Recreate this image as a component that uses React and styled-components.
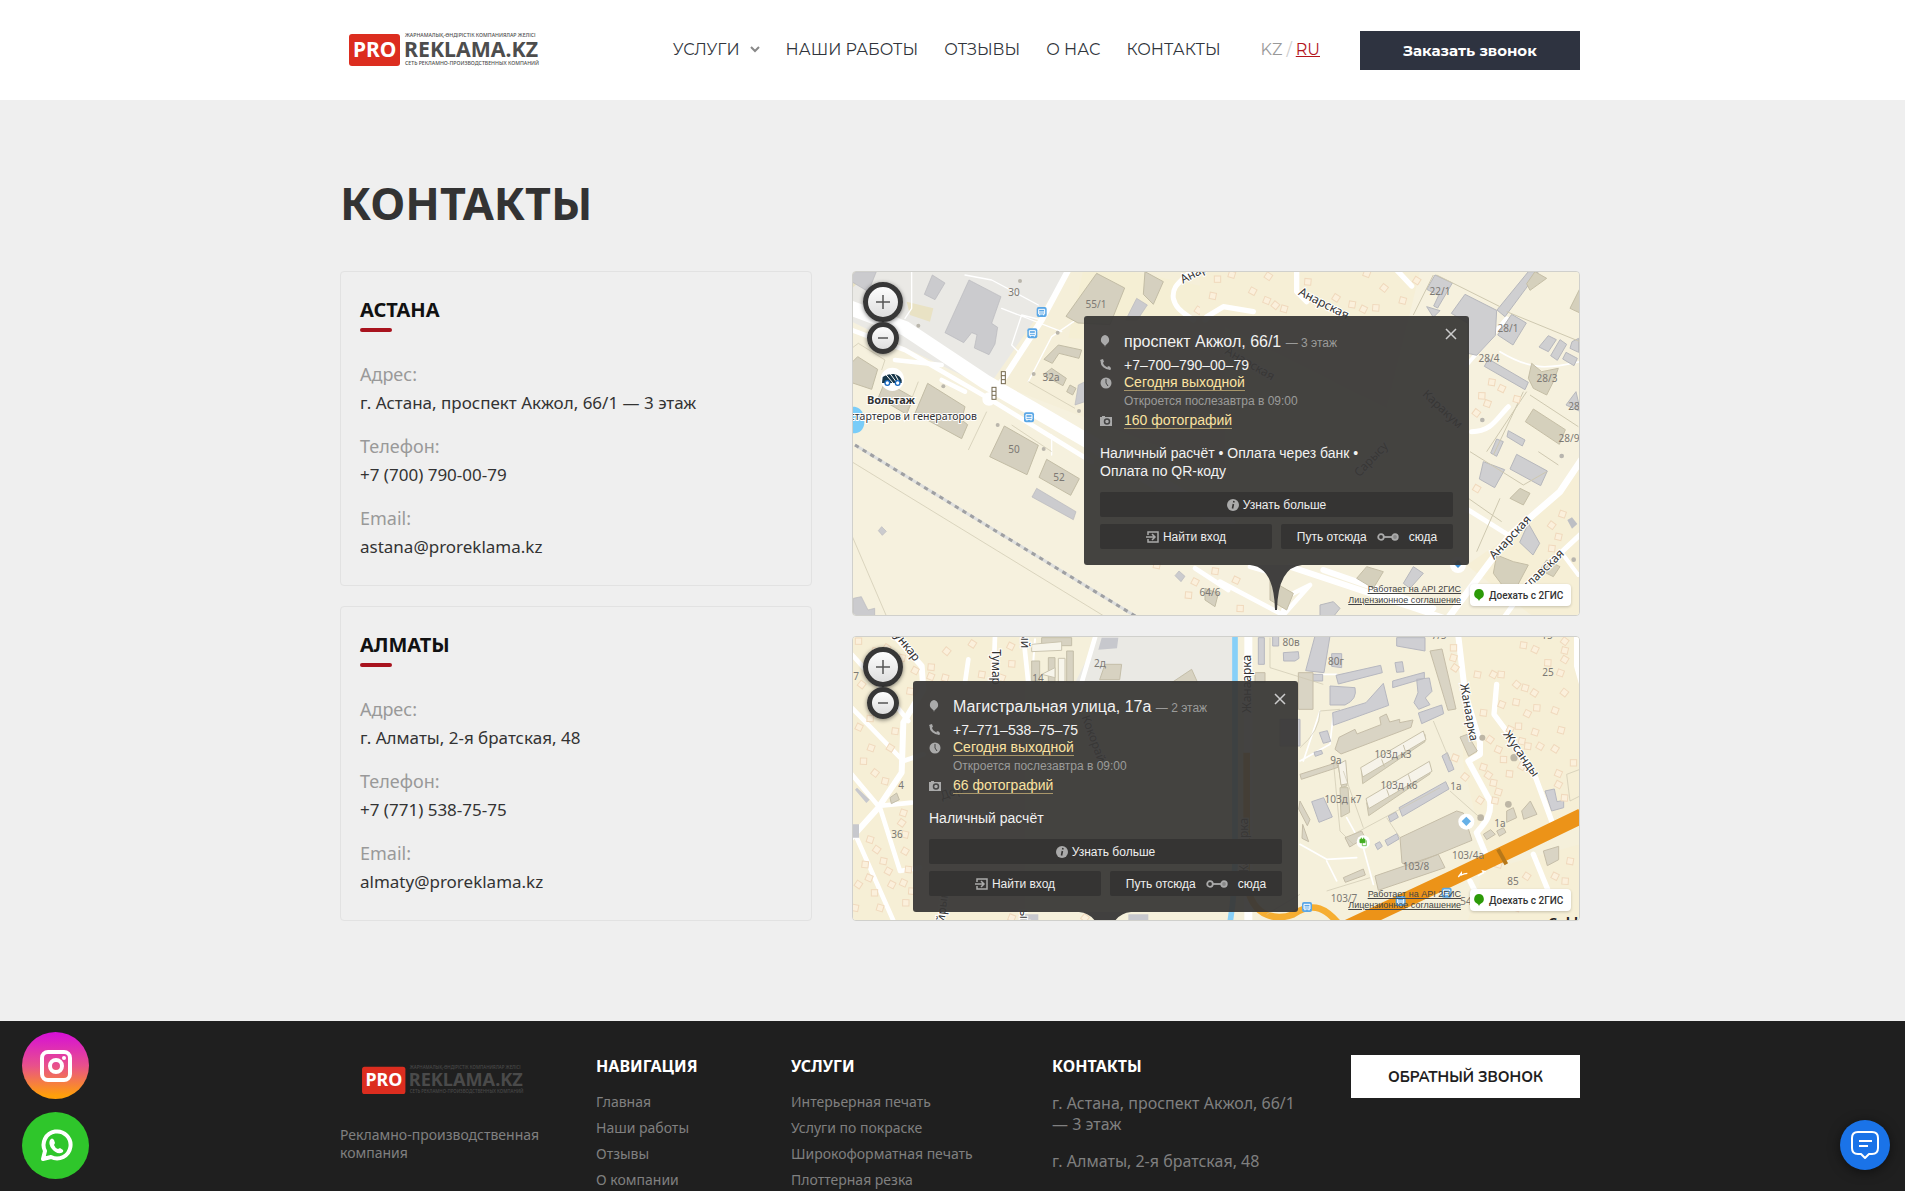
import styled, { createGlobalStyle, css } from 'styled-components'

const GlobalStyle = createGlobalStyle`
  * {
    box-sizing: border-box;
  }
  body {
    margin: 0;
    background: #efefef;
    font-family: 'Noto Sans', 'Open Sans', sans-serif;
    color: #333;
  }
  h1, h2, h3, p, ul, dl, dd {
    margin: 0;
    padding: 0;
  }
  a {
    color: inherit;
    text-decoration: none;
  }
  button {
    font: inherit;
    border: 0;
    cursor: pointer;
  }
`

const Page = styled.div`
  display: flex;
  flex-direction: column;
  min-height: 100vh;
`
const Wrap = styled.div`
  width: 100%;
  max-width: 1255px;
  margin: 0 auto;
  padding-left: 15px;
`

const Header = styled.header`
  background: #fff;
`
const HeaderRow = styled(Wrap)`
  display: flex;
  align-items: center;
  height: 100px;
`
const LogoLink = styled.a`
  display: flex;
  margin-left: 9px;
  svg {
    display: block;
    width: 188px;
  }
`
const Nav = styled.nav`
  display: flex;
  align-items: center;
  gap: 26px;
  margin-left: auto;
  padding-bottom: 2px;
  font-family: Montserrat, Inter, sans-serif;
  font-size: 16px;
  color: #2f343b;
`
const NavLink = styled.a`
  display: flex;
  align-items: center;
  gap: 10px;
`
const Lang = styled.div`
  display: flex;
  gap: 4px;
  margin: 0 40px;
  padding-bottom: 2px;
  font-family: Montserrat, Inter, sans-serif;
  font-size: 16px;
  color: #ccc;
`
const LangLink = styled.a`
  color: #999;
  ${(props) =>
    props.$active &&
    css`
      color: #b3141b;
      text-decoration: underline;
    `}
`
const CallButton = styled.button`
  width: 220px;
  height: 39px;
  background: #2e3340;
  color: #fff;
  font-family: Montserrat, 'Open Sans', sans-serif;
  font-size: 15px;
  font-weight: 700;
`

const Main = styled(Wrap)`
  padding-top: 72px;
  padding-bottom: 100px;
`
const Title = styled.h1`
  font-size: 45px;
  line-height: 62px;
  font-weight: 700;
`
const Columns = styled.div`
  display: grid;
  grid-template-columns: 472fr 728fr;
  gap: 40px;
  margin-top: 37px;
`
const Column = styled.div`
  display: flex;
  flex-direction: column;
  gap: 20px;
`
const Card = styled.section`
  padding: 23px 19px 24px;
  border: 1px solid #e2e2e2;
  border-radius: 4px;
`
const CardTitle = styled.h2`
  font-size: 20px;
  line-height: 29px;
  font-weight: 700;
  color: #111;
  &::after {
    content: '';
    display: block;
    width: 32px;
    height: 4px;
    margin-top: 4px;
    border-radius: 2px;
    background: #a8131e;
  }
`
const Info = styled.dl`
  display: grid;
  gap: 15px;
  margin-top: 28px;
`
const Label = styled.dt`
  font-size: 18px;
  line-height: 28px;
  color: #999;
`
const Value = styled.dd`
  font-size: 17px;
  line-height: 29px;
`

const MapBox = styled.section`
  position: relative;
  height: ${(props) => props.$height}px;
  overflow: hidden;
  border: 1px solid #d0d0cc;
  border-radius: 4px;
  background: #f5f1dd;
  font-family: 'Liberation Sans', Arial, sans-serif;
`
const MapSvg = styled.svg`
  position: absolute;
  top: 0;
  left: 0;
  display: block;
`
const Zoom = styled.div`
  position: absolute;
  top: 10px;
  left: 10px;
  display: flex;
  flex-direction: column;
  align-items: center;
`
const ZoomButton = styled.button`
  display: grid;
  place-items: center;
  width: ${(props) => props.$size}px;
  height: ${(props) => props.$size}px;
  padding: 0;
  border: 5px solid #373737;
  border-radius: 50%;
  background: linear-gradient(#fdfdfd, #dedede);
  box-shadow: 0 1px 4px rgba(0, 0, 0, 0.5);
`
const Balloon = styled.div`
  position: absolute;
  top: 44px;
  left: ${(props) => props.$left}px;
  width: 385px;
  padding: 14px 16px 16px;
  border-radius: 3px;
  background: rgba(56, 55, 54, 0.94);
  color: #f2f2f2;
  font-size: 14px;
  line-height: 18px;
`
const Tail = styled.svg`
  position: absolute;
  top: 100%;
  left: 166px;
  display: block;
`
const Close = styled.button`
  position: absolute;
  top: 8px;
  right: 8px;
  display: flex;
  padding: 4px;
  background: none;
`
const Line = styled.div`
  display: grid;
  grid-template-columns: 24px 1fr;
  align-items: center;
  min-height: ${(props) => props.$height}px;
`
const Place = styled.h3`
  font-size: 16px;
  font-weight: 400;
`
const Muted = styled.span`
  font-size: 12px;
  color: #9b9b9a;
`
const Yellow = styled.a`
  justify-self: start;
  height: 16px;
  line-height: 15px;
  border-bottom: 1px solid #a8966a;
  color: #fbe2a0;
`
const Opens = styled(Muted)`
  display: block;
  padding-left: 24px;
  line-height: 20px;
`
const Payments = styled.p`
  margin: 13px 0 12px;
`
const Actions = styled.div`
  display: grid;
  grid-template-columns: 1fr 1fr;
  gap: 7px 9px;
`
const Action = styled.button`
  display: flex;
  align-items: center;
  justify-content: center;
  gap: ${(props) => props.$gap || 4}px;
  height: 25px;
  padding: 0;
  border-radius: 2px;
  background: #353433;
  color: #eee;
  font-size: 12px;
  grid-column: ${(props) => (props.$wide ? '1 / -1' : 'auto')};
`
const MapFooter = styled.div`
  position: absolute;
  right: 8px;
  bottom: 9px;
  display: flex;
  align-items: center;
  gap: 9px;
`
const Terms = styled.div`
  display: flex;
  flex-direction: column;
  align-items: flex-end;
  color: #444;
  font-size: 9px;
  line-height: 11px;
  a {
    text-decoration: underline;
  }
`
const Drive = styled.a`
  display: flex;
  align-items: center;
  gap: 4px;
  width: 101px;
  height: 22px;
  padding-left: 3px;
  border-radius: 4px;
  background: #fff;
  box-shadow: 0 1px 3px rgba(0, 0, 0, 0.2);
  color: #333;
  font: 500 10px Roboto, sans-serif;
`

const Footer = styled.footer`
  flex: 1;
  background: #1f1f1f;
  color: #808080;
`
const FooterRow = styled(Wrap)`
  display: flex;
  padding-top: 34px;
`
const FooterCol = styled.div`
  width: ${(props) => props.$width}px;
`
const FooterLogo = styled.a`
  display: block;
  margin: 11px 0 31px 22px;
  svg {
    display: block;
    width: 160px;
  }
`
const About = styled.p`
  width: 210px;
  font-size: 14px;
  line-height: 18px;
`
const FooterTitle = styled.h3`
  font-size: 16px;
  line-height: 22px;
  font-weight: 700;
  color: #fff;
`
const FooterList = styled.ul`
  display: grid;
  gap: 8px;
  margin-top: 16px;
  list-style: none;
  font-size: 14px;
  line-height: 18px;
`
const Address = styled.p`
  max-width: 250px;
  margin-top: 16px;
  font-size: 16px;
  line-height: 21px;
`
const BackCall = styled.button`
  width: 229px;
  height: 43px;
  margin-left: auto;
  background: #fff;
  color: #1f1f1f;
  font-family: Nunito, 'Open Sans', sans-serif;
  font-size: 15px;
  font-weight: 700;
`
const Socials = styled.div`
  position: fixed;
  left: 22px;
  bottom: 12px;
  display: grid;
  gap: 13px;
`
const Social = styled.a`
  display: grid;
  place-items: center;
  width: 67px;
  height: 67px;
  border-radius: 50%;
  background: ${(props) => props.$bg};
`
const Chat = styled.button`
  position: fixed;
  right: 15px;
  bottom: 21px;
  display: grid;
  place-items: center;
  width: 50px;
  height: 50px;
  padding: 0;
  border-radius: 50%;
  background: #1a73e8;
  box-shadow: 0 2px 12px rgba(0, 0, 0, 0.5);
`

const Logo = ({ dim }) => (
  <svg viewBox="0 0 188 34" overflow="visible" fontFamily="Noto Sans, sans-serif">
    <rect y="1" width="51" height="32" rx="3" fill="#dc2d1f" />
    <g fontSize="21" fontWeight="700">
      <text x="4" y="24" fill="#fff">PRO</text>
      <text x="55" y="24" fontSize="21.300" fill={dim ? '#4a4a4a' : '#4d4d4d'}>REKLAMA.KZ</text>
    </g>
    <g fontSize="5.200" fontWeight="500" fill={dim ? '#4a4a4a' : '#4d4d4d'}>
      <text x="56" y="4">ЖАРНАМАЛЫҚ-ӨНДІРІСТІК КОМПАНИЯЛАР ЖЕЛІСІ</text>
      <text x="56" y="32">СЕТЬ РЕКЛАМНО-ПРОИЗВОДСТВЕННЫХ КОМПАНИЙ</text>
    </g>
  </svg>
)

const Labels = ({ items, ...rest }) => (
  <g fontFamily="Noto Sans, sans-serif" {...rest}>
    {items.map(([text, x, y, angle = 0], i) => (
      <text key={i} textAnchor="middle" transform={`translate(${x} ${y}) rotate(${angle})`}>
        {text}
      </text>
    ))}
  </g>
)

const Houses = ({ points }) => (
  <g fill="#fbf0dc" stroke="#f0d9bd" strokeWidth="3">
    {points.map(([x, y], i) => (
      <rect key={i} x={-9} y={-9} width="19" height="19" transform={`translate(${x} ${y}) rotate(${(i * 17) % 40})`} />
    ))}
  </g>
)

const Bus = ({ x, y }) => (
  <g transform={`translate(${x} ${y})`}>
    <rect x="-15" y="-15" width="30" height="30" rx="6" fill="#5aa7e6" />
    <path d="M-9 -8h18v14h-18zM-9 0h18M-6 6v4M6 6v4" fill="none" stroke="#fff" strokeWidth="3" />
  </g>
)

const AstanaMap = () => (
  <MapSvg width="728" height="345" viewBox="0 0 728 345" aria-hidden="true">
    <rect width="728" height="345" fill="#f6f1de" />
    <g transform="translate(-8 -7) scale(0.33333)">
      <path d="M20 20H670L430 370 20 170Z" fill="#eae9e5" />
      <path d="M20 20h60L20 70zM185 110l80 20-10 40-60-20z" fill="#e9e2c4" />
      <path d="M670 20L1140 20V620L440 350Z" fill="#f5efd9" />
      <path d="M720 -10l380 80-130 160-300-10z" fill="#f5efd4" />
      <g fill="none" stroke="#fff" strokeLinecap="round" strokeLinejoin="round">
        <path d="M20 130L180 190 420 350 560 430 800 570 1150 780" strokeWidth="44" />
        <path d="M20 195L180 255 430 400 740 590" strokeWidth="14" />
        <path d="M670 15L590 165 470 350 425 410" strokeWidth="18" />
        <path d="M150 285L290 300 M290 345L360 380M430 400v10" strokeWidth="14" />
        <path d="M360 30L440 45 580 120 M590 165L530 150 500 240 520 260M470 130L650 200M200 20v110l-20 30" strokeWidth="4" />
        <path d="M550 350L620 215 700 160M620 570v-60" strokeWidth="4" />
        <path d="M1040 15C1010 50 980 60 985 100c8 35 35 45 60 65M1140 120l-60 45" strokeWidth="15" />
        <path d="M1050 910L1150 975" strokeWidth="14" />
      </g>
      <circle cx="432" cy="402" r="20" fill="#fff" />
      <g fill="#cbcbce" stroke="#b8b8bc" strokeWidth="2">
        <path d="M372 45l96 50-28 80 18 12-8 50-18 32-44-20 8-40-16-6-24 30-56-30zM262 30l38 24-30 50-32-16zM24 20h70L70 80 20 50z" />
        <path d="M575 670l118 70-8 24-124-68zM875 100l32 20-30 45h-35zM100 797l10-12 14 14-12 12zM25 1000l24-5 20 40 20-5v22H25zM700 360l20-10v60l-30 10zM990 932l12-14 18 16-12 16z" />
      </g>
      <g fill="#d5d0bf" stroke="#c2bca5" strokeWidth="3">
        <path d="M38 275l60 38-18 60-60-20v-60zM120 350l85 48-20 50-85-50zM248 355l112 70-10 40 18 14-18 42-140-76zM478 483l102 58-34 88-112-54zM605 583l98 58-26 50-95-54zM755 25l84 44-44 110-96-5-36-20zM900 20l55 30-30 68-30-30zM640 240l70 15-8 25-60-15-20 30-25-12zM620 310l44 30-10 22-60-32zM675 360l18 10-10 20-18-10zM1080 970l40 15-10 40-30-20z" />
      </g>
      <path d="M20 250l20-15 80 50-10 30M220 350l-35 90M370 555L425 440M550 350l140 80M20 590L780 1055M20 810L125 1055M500 480l120 80" fill="none" stroke="#cbc6ae" strokeWidth="2" />
      <path d="M30 540L890 1065" stroke="#dedfde" strokeWidth="9" />
      <path d="M30 540L890 1065" stroke="#9fa0a3" strokeWidth="9" strokeDasharray="13 14" />
      <path d="M24 425c30 0 34 30 34 45 0 25-15 35-34 35z" fill="#79ccf8" />
      <Houses points={[[1120, 40], [1105, 92], [1060, 135], [935, 900], [1050, 950], [1030, 990]]} />
      <Bus x={590} y={141} />
      <Bus x={562} y={205} />
      <Bus x={552} y={457} />
      {[[475, 338], [447, 385]].map(([x, y]) => (
        <g key={x} transform={`translate(${x} ${y})`} fill="#fff" stroke="#75694f" strokeWidth="3">
          <rect x="-6" y="-18" width="12" height="36" />
          <path d="M-6 -6H6M-6 6H6" />
        </g>
      ))}
      <circle cx="142" cy="343" r="35" fill="#fff" />
      <path d="M111 354l2-18q14-10 35-9 18 4 22 18v9z" fill="#18384b" />
      <path d="M122 328l22 26M136 327l20 27M150 328l14 26" stroke="#fff" strokeWidth="3" />
      <circle cx="127" cy="354" r="7" fill="#fff" stroke="#1768c0" strokeWidth="4" />
      <circle cx="158" cy="354" r="7" fill="#fff" stroke="#1768c0" strokeWidth="4" />
      <g fill="#bab6ac">
        {[[220, 182], [525, 48], [638, 203], [566, 327], [458, 480], [596, 552], [702, 438], [295, 364]].map(([x, y]) => (
          <circle key={x} cx={x} cy={y} r="6" />
        ))}
      </g>
    </g>
    <g transform="translate(347 -7) scale(0.33333)">
      <path d="M0 20H660L560 430 360 330 0 150Z" fill="#f6efd6" />
      <path d="M1140 600V1055H1000L800 900 990 770Z" fill="#f6efd6" />
      <g fill="none" stroke="#fff" strokeLinecap="round" strokeLinejoin="round">
        <path d="M290 15v65l30 30M20 155l50-30 90 15M590 15l45 48" strokeWidth="16" />
        <path d="M805 735L925 810M815 500c60 0 75-40 110-75" strokeWidth="15" />
        <path d="M1150 575L1080 680 930 810 740 1065" strokeWidth="20" />
        <path d="M1150 800L990 950 910 1060" strokeWidth="15" />
        <path d="M270 905L750 1065M370 915L700 1030" strokeWidth="18" />
        <path d="M60 950l180 95M240 1060l30-70 60-30-80 90M150 905l70 20" strokeWidth="14" />
        <path d="M920 160l-120 140M1090 870l45 60" strokeWidth="12" />
        <path d="M900 260c100 60 150 50 240 30" strokeWidth="5" />
      </g>
      <g fill="#cfcfd1" stroke="#b6b7bc" strokeWidth="3">
        <path d="M705 30l52 24-44 75-12-6 15-32-36-18zM795 88l95 48-4 75-56 60-26-6v-90l-50-30zM985 20h30l-100 135-24-20zM935 148l44 26-40 66-46-30zM1045 212l24 12-24 36-28-14zM1080 224l20 14-28 48-20-14zM1110 250l26 12V220l-20 10zM1098 262l34 18-10 22-34-20zM865 282l120 70-10 22-122-70zM925 497l50 28-8 18-46-28zM890 522l20 8-20 44-18-10zM950 568l92 50-20 44-92-50zM850 590l64 24-30 54-46-26zM1128 380l14 60-44-20zM985 775l34 60-20 35-40-38zM680 125l40 12-20 20zM640 905l30 20-40 45-20-15zM360 1020l40-10 20 20-20 25h-40z" />
      </g>
      <g fill="#d5d0bc" stroke="#c5bea6" strokeWidth="3">
        <path d="M1000 432l96 62-18 44-102-68zM995 295l30 25 50-10-15 40-20 40-40-20-15-30zM1005 20l35 20-50 36-10-20zM1140 70l-30 60 30 14zM960 670l30 15-20 35-40-20zM890 870l50 20 45 10-45 85-30-20-30-40zM500 905l50 15-30 50-50-30zM1040 885l40 20-20 30-40-20zM210 945l70 40-20 50-50-30z" />
      </g>
      <path d="M700 30L640 150M710 30l190 95M920 140l220 90M810 560l160 100 70-40M970 380l-90 190M990 390l145 95M1075 600l-60-40M900 700L830 860M805 700l100 70M980 380L860 560" fill="none" stroke="#cec8b0" strokeWidth="3" />
      <Houses points={[[52, 42], [95, 28], [205, 33], [38, 92], [158, 78], [323, 50], [200, 106], [226, 120], [252, 131], [408, 98], [456, 118], [490, 132], [527, 128], [500, 25], [552, 68], [608, 106], [650, 46], [875, 351], [905, 370], [845, 392], [862, 415], [829, 443], [950, 402], [830, 670], [45, 918], [108, 945], [120, 1030], [1087, 747], [1055, 780], [1075, 815], [905, 1000], [1055, 850]]} />
      <g fill="#b8b5ae">
        <circle cx="847" cy="465" r="7" />
        <circle cx="1085" cy="573" r="7" />
        <circle cx="1121" cy="884" r="7" />
      </g>
      <path d="M1102 765l14-8 16 20-16 14z" fill="#bdbfc4" />
      <circle cx="774" cy="900" r="24" fill="#fff" />
      <path d="M774 885l12 12-12 12-12-12z" fill="#3a8ed6" />
    </g>
    <Labels fill="#7c7974" fontSize="10" items={[['30', 161, 24], ['55/1', 243, 36], ['32а', 198, 109], ['50', 161, 181], ['52', 206, 209], ['64/6', 357, 324], ['22/1', 587, 23], ['28/1', 655, 60], ['28/4', 636, 90], ['28/3', 694, 110], ['28', 721, 138], ['28/9', 716, 170]]} />
    <Labels fill="#333" fontSize="12" stroke="#fff" strokeWidth="2" paintOrder="stroke" items={[['Анарская', 469, 35, 27], ['Анарская', 354, -1, -28], ['Анарская', 660, 268, -47], ['Ярославская', 685, 308, -44], ['Каракум', 587, 140, 43], ['Сарысу', 521, 190, -46], ['Анарская', 395, 95, 30]]} />
    <g fontFamily="Noto Sans, sans-serif" fill="#333" stroke="#fff" strokeWidth="2" paintOrder="stroke">
      <text x="38" y="132" fontSize="11" fontWeight="700" textAnchor="middle">Вольтаж</text>
      <text x="124" y="148" fontSize="10.500" textAnchor="end">стартеров и генераторов</text>
    </g>
  </MapSvg>
)

const AlmatyMap = () => (
  <MapSvg width="728" height="285" viewBox="0 0 728 285" aria-hidden="true">
    <rect width="728" height="285" fill="#f5f0db" />
    <g transform="translate(-8 -6) scale(0.33333)">
      <path d="M20 15H540V880H20Z" fill="#f6efd6" />
      <path d="M760 15h400v140H690z" fill="#eae9e4" />
      <g fill="none" stroke="#fff" strokeLinecap="round" strokeLinejoin="round">
        <path d="M150 15l80 90 5 70-60 100-5 150-70 105L15 625" strokeWidth="18" />
        <path d="M20 70l90 100 80 100M20 230l155 160 60-20M20 430l80 95 100-10M105 530l60 190 60-10M35 620L150 880M450 15l-5 140M370 85l-10 70M535 15l15 140M750 20l-40 135" strokeWidth="14" />
        <path d="M560 40h100M560 155l10-130" strokeWidth="6" />
      </g>
      <g fill="#d7d2c1" stroke="#c4bea9" strokeWidth="3">
        <path d="M590 20h90v24h-90zM1040 115l18 40h-78zM780 100h50l-6 46h-60zM665 60h20v95h-20zM610 80h20v75h-20zM560 90h24v60h-24zM135 500l20-14 8 20-24 12z" />
      </g>
      <g fill="#f7f5eb" stroke="#cbc5b0" strokeWidth="3">
        <path d="M560 40l90-8v26l-90 4zM640 82h20v72h-20zM590 130l40-20v30z" />
      </g>
      <path d="M770 20h50l-4 32-56 4zM36 470l38 36-10 10-34-40zM20 580h22v40H20zM540 850h40v20h-40zM850 850h60v24h-60z" fill="#c7c8cd" />
      <Houses points={[[40, 30], [90, 60], [125, 50], [170, 80], [210, 118], [258, 108], [257, 136], [305, 60], [300, 140], [382, 38], [410, 130], [497, 45], [500, 98], [470, 140], [50, 160], [100, 130], [140, 200], [195, 180], [42, 288], [75, 262], [78, 350], [90, 425], [120, 450], [136, 350], [150, 300], [110, 240], [55, 390], [175, 545], [170, 575], [180, 610], [180, 660], [190, 715], [175, 755], [182, 815], [75, 625], [95, 655], [115, 690], [130, 720], [60, 700], [72, 740], [88, 785], [105, 830], [40, 760], [30, 830], [140, 760], [200, 780], [500, 860], [720, 860]]} />
    </g>
    <g transform="translate(347 -6) scale(0.33333)">
      <path d="M0 15H105V160H0Z" fill="#eae9e4" />
      <path d="M780 15H1140V560L860 700 790 400Z" fill="#f6efd6" />
      <path d="M1140 640V880H800L850 720Z" fill="#f6efd6" />
      <g fill="none" stroke="#fff" strokeLinecap="round" strokeLinejoin="round">
        <path d="M145 15V870" strokeWidth="24" />
        <path d="M775 15l20 170 45 150v35l-35 20 65 120c5 45-15 65-40 95l25 60" strokeWidth="18" />
        <path d="M890 160l-8 90 45 60 80 130 48 130M1000 670l45 110M1130 15v90l14 50M810 750l15 30" strokeWidth="16" />
        <path d="M300 390l90-50 10-90M350 130h60M440 560l50 90 30 110M300 640l80 45 90-5M360 240l-50 150M380 690l30 60" strokeWidth="5" />
      </g>
      <path d="M105 15v670q0 100-15 190" fill="none" stroke="#87d0f8" strokeWidth="17" />
      <path d="M140 365V760c20 110 100 105 140 90 60-40 100-20 150 45" fill="none" stroke="#f6ae31" strokeWidth="20" />
      <g fill="#cfcfd3" stroke="#b6b7bf" strokeWidth="3">
        <path d="M345 15h45l-18 110-55-6zM175 20h18v80h-18zM250 65l45-3 2 20-12 8h-34zM218 15h18v30h-18zM330 130h38v20h-38zM395 68h30v42l-30-4zM408 133l134-30 5 22-132 34zM585 95l22-3 5 30-22 2zM578 150l95-26v18l-95 28zM650 145l38-4 8 40-20 20 14 20-34 14-14-20 12-30zM390 165l75 5q8 35-30 52h-45zM398 245l100-30 52-58 16 66-166 60zM655 246l70-24 6 26-66 30zM358 305l24-6 10 32-22 6zM342 364l22-6 4 10-22 8zM335 512l36-12 26 58-40 16zM597 530l140-78 10 22-140 82zM726 375l16-10 20 50-16 8zM565 555l22-12 8 16-24 14zM555 628l36-20 6 16-34 20zM590 20h85v40l-85-15zM1035 480l28-6 8 38 20-4v22l-36 10zM240 265h60v80h-60zM525 640l14-8 8 14-14 10z" />
      </g>
      <g fill="#d9d4c4" stroke="#c5bda8" strokeWidth="3">
        <path d="M690 60l36-6 42 180-24 4zM295 125h44v110h-44zM165 125h30v30h-30zM405 355l12-36 48-24 6 14 72-28-4-22 20-10 10 24 30-8v10l40-8-6 22-210 80zM600 620L770 540l20 6 26 82-190 78-20-10zM525 735l190-65 20 40-200 68zM780 318l22-8 30 50-26 16zM435 620l50-20 10 20-46 28zM300 510l30 56-8 18-26-50zM308 580l18 52-20-10zM300 430l110-35 4 14-110 36zM430 740l60-26 6 18-60 22zM965 540l26-30 20 40-40 15zM920 540l20-10 10 30-30 14zM850 610l22-14 14 14-26 16zM890 600l20-10 8 14-20 12zM1030 660l46-14v40l-34 18z" />
      </g>
      <g stroke="#c8c1aa" strokeWidth="3">
        <path d="M485 420l190-110v22L488 458zM500 515l190-110v24L506 554zM415 405l20-10 6 70-16 4zM420 470h24l5 74-26 14z" fill="#d8d3c1" />
        <path d="M482 410l188-110 8 26-190 112zM498 503l190-112 8 30-190 112zM415 400l22-12 6 70-20 4z" fill="#f6f3e9" />
        <path d="M545 385l8 22M610 342l8 24M560 475l8 22M625 430l8 24" />
      </g>
      <path d="M210 20v90l160 50M360 240l60-5M400 390l20 210 40 40M430 420l60 170M460 610l260-140M700 270l50 120M750 480l90 80M380 780l130-40M560 560l40 60M1100 430l40-15v80l-30 15zM360 240q0 60-60 110M200 850l100-60" fill="none" stroke="#cbc5af" strokeWidth="2" />
      <Houses points={[[760, 50], [760, 80], [765, 110], [832, 130], [880, 130], [903, 130], [905, 220], [950, 160], [975, 170], [1003, 185], [948, 213], [982, 247], [1010, 230], [1065, 238], [1093, 184], [1083, 297], [1065, 353], [970, 42], [1005, 55], [1043, 95], [1081, 125], [1094, 30], [1094, 58], [1094, 85], [850, 245], [930, 295], [955, 285], [1005, 303], [870, 325], [965, 330], [1020, 345], [983, 345], [895, 355], [910, 385], [850, 408], [865, 432], [880, 455], [965, 405], [928, 428], [1075, 427], [1120, 395], [895, 482], [840, 507], [885, 508], [1075, 460], [1093, 500], [765, 380], [795, 437], [895, 700], [980, 735], [1110, 690], [1065, 735], [1095, 750], [950, 830]]} />
      <path d="M440 890L760 740 1145 555" fill="none" stroke="#ec9318" strokeWidth="46" />
      <path d="M894 655l25 45" stroke="#b77819" strokeWidth="12" />
      <path d="M775 738l9-12v6q8-5 18-5M858 722l-10-2 3 5-18 10" fill="none" stroke="#fff" strokeWidth="4" />
      <Bus x={321} y={828} />
      <Bus x={602} y={810} />
      <Bus x={740} y={785} />
      <circle cx="799" cy="572" r="24" fill="#fff" />
      <path d="M799 557l14 14-14 14-14-14z" fill="#66b0e7" />
      <circle cx="490" cy="633" r="20" fill="#fff" />
      <path d="M480 625h15v10h-15zM484 620v5M491 620v5" fill="#43ad22" stroke="#43ad22" strokeWidth="3" />
      <path d="M487 636v8h12v-16" fill="none" stroke="#43ad22" strokeWidth="2" />
      <g fill="#bdb6a5">
        <circle cx="847" cy="320" r="9" />
        <circle cx="942" cy="380" r="11" />
        <circle cx="925" cy="520" r="10" />
        <circle cx="842" cy="560" r="10" />
      </g>
    </g>
    <Labels fill="#7c7974" fontSize="10" items={[['7', 3, 43], ['14', 185, 45], ['2д', 247, 30], ['36', 44, 201], ['4', 48, 152], ['80в', 438, 9], ['80г', 483, 28], ['7/5', 586, 2], ['25', 695, 39], ['9а', 483, 127], ['103д к3', 540, 121], ['103д к6', 546, 152], ['103д к7', 490, 166], ['1а', 603, 153], ['1а', 647, 190], ['103/8', 563, 233], ['103/4а', 615, 222], ['85', 660, 248], ['103/7', 491, 265], ['54', 613, 268], ['15', 694, 2]]} />
    <Labels fill="#333" fontSize="12" stroke="#fff" strokeWidth="2" paintOrder="stroke" items={[['Бункар', 49, 9, 52], ['Тумар', 139, 30, 90], ['ый', 168, 3, 90], ['Жанаарка', 398, 47, -90], ['Жанаарка', 612, 76, 80], ['Жусанды', 665, 119, 55], ['Жанаарка', 395, 210, -90], ['Кокорай', 237, 103, 70], ['Доре', 103, 158, -20], ['Тайрына', 93, 273, -83], ['ый', 167, 281, 90]]} />
    <text x="725" y="290" fontFamily="Noto Sans, sans-serif" fontSize="13" fontWeight="700" fill="#222" textAnchor="end">Gold</text>
  </MapSvg>
)

const PinIcon = () => (
  <svg width="12" height="14" viewBox="0 0 12 14" fill="#aaa">
    <path d="M5 0a5 5 0 0 1 2 9Q5 10 5 12 5 10 3 9A5 5 0 0 1 5 0z" />
  </svg>
)
const PhoneIcon = () => (
  <svg width="12" height="12" viewBox="0 0 12 12">
    <path d="M2 1q-1 4 2 6.500T10.500 10" fill="none" stroke="#aaa" strokeWidth="2.200" />
    <path d="M0 1l3-1 1 3-2 1zM7 8l2-1 2 2-1 2z" fill="#aaa" />
  </svg>
)
const ClockIcon = () => (
  <svg width="12" height="12" viewBox="0 0 12 12">
    <circle cx="6" cy="6" r="5.500" fill="#aaa" />
    <path d="M6 2v4l2 3" fill="none" stroke="#444" />
  </svg>
)
const CameraIcon = () => (
  <svg width="12" height="12" viewBox="0 0 12 12">
    <path d="M0 2h2V1h3v1h7v9H0z" fill="#aaa" />
    <circle cx="7" cy="6.500" r="2.500" fill="none" stroke="#444" strokeWidth="1.500" />
  </svg>
)

const MapCard = ({ height, left, address, floor, phone, photos, payments, children }) => (
  <MapBox $height={height} aria-label={address}>
    {children}
    <Zoom>
      <ZoomButton $size={40} aria-label="Приблизить">
        <svg width="16" height="16" viewBox="0 0 16 16">
          <path d="M8 1v14M1 8h14" stroke="#555" strokeWidth="1.500" />
        </svg>
      </ZoomButton>
      <ZoomButton $size={32} aria-label="Отдалить">
        <svg width="12" height="12" viewBox="0 0 12 12">
          <path d="M1 6h10" stroke="#555" strokeWidth="1.500" />
        </svg>
      </ZoomButton>
    </Zoom>
    <MapFooter>
      <Terms>
        <a href="#api">Работает на API 2ГИС</a>
        <a href="#license">Лицензионное соглашение</a>
      </Terms>
      <Drive href="#drive">
        <svg width="12" height="14" viewBox="0 0 12 14" fill="#2c9a08">
          <path d="M6 1a5 5 0 0 1 2 9.500Q6.500 11 6 13 5.500 11 4 10.500A5 5 0 0 1 6 1z" />
        </svg>
        Доехать с 2ГИС
      </Drive>
    </MapFooter>
    <Balloon $left={left}>
      <Close aria-label="Закрыть">
        <svg width="12" height="12" viewBox="0 0 12 12">
          <path d="M1 1l10 10M11 1L1 11" stroke="#ccc" strokeWidth="1.500" />
        </svg>
      </Close>
      <Line $height={24}>
        <PinIcon />
        <Place>
          {address} <Muted>— {floor} этаж</Muted>
        </Place>
      </Line>
      <Line $height={21}>
        <PhoneIcon />
        <span>{phone}</span>
      </Line>
      <Line $height={16}>
        <ClockIcon />
        <Yellow href="#hours">Сегодня выходной</Yellow>
      </Line>
      <Opens>Откроется послезавтра в 09:00</Opens>
      <Line $height={20}>
        <CameraIcon />
        <Yellow href="#photos">{photos} фотографий</Yellow>
      </Line>
      <Payments>{payments}</Payments>
      <Actions>
        <Action $wide>
          <svg width="12" height="12" viewBox="0 0 12 12">
            <circle cx="6" cy="6" r="6" fill="#aaa" />
            <path d="M7 2L6.600 3.500M6.400 5L5.500 9.500" stroke="#353433" strokeWidth="1.600" />
          </svg>
          Узнать больше
        </Action>
        <Action>
          <svg width="13" height="12" viewBox="0 0 13 12" fill="none" stroke="#aaa" strokeWidth="1.500">
            <path d="M2 4V1h10v10H2V8M0 6h8M6 3l3 3-3 3" />
          </svg>
          Найти вход
        </Action>
        <Action $gap={10}>
          Путь отсюда
          <svg width="22" height="8" viewBox="0 0 22 8" fill="none" stroke="#aaa" strokeWidth="1.800">
            <circle cx="4" cy="4" r="2.800" />
            <circle cx="18" cy="4" r="2.800" fill="#888" />
            <path d="M7 4h8" />
          </svg>
          сюда
        </Action>
      </Actions>
      <Tail width="52" height="46" viewBox="0 0 52 46">
        <path d="M0 0Q24 2 25 45h2Q28 2 52 0z" fill="#41403f" />
      </Tail>
    </Balloon>
  </MapBox>
)

const contacts = [
  { city: 'АСТАНА', address: 'г. Астана, проспект Акжол, 66/1 — 3 этаж', phone: '+7 (700) 790-00-79', email: 'astana@proreklama.kz' },
  { city: 'АЛМАТЫ', address: 'г. Алматы, 2-я братская, 48', phone: '+7 (771) 538-75-75', email: 'almaty@proreklama.kz' },
]

const pages = ['Главная', 'Наши работы', 'Отзывы', 'О компании']
const services = ['Интерьерная печать', 'Услуги по покраске', 'Широкоформатная печать', 'Плоттерная резка']

function App() {
  return (
    <Page>
      <GlobalStyle />
      <Header>
        <HeaderRow>
          <LogoLink href="#home" aria-label="PRO REKLAMA.KZ">
            <Logo />
          </LogoLink>
          <Nav>
            <NavLink href="#services">
              УСЛУГИ
              <svg width="10" height="8" viewBox="0 0 10 8">
                <path d="M1 2l4 4 4-4" fill="none" stroke="#888" strokeWidth="2" />
              </svg>
            </NavLink>
            <NavLink href="#works">НАШИ РАБОТЫ</NavLink>
            <NavLink href="#reviews">ОТЗЫВЫ</NavLink>
            <NavLink href="#about">О НАС</NavLink>
            <NavLink href="#contacts">КОНТАКТЫ</NavLink>
          </Nav>
          <Lang>
            <LangLink href="#kz">KZ</LangLink>/
            <LangLink href="#ru" $active>
              RU
            </LangLink>
          </Lang>
          <CallButton>Заказать звонок</CallButton>
        </HeaderRow>
      </Header>

      <Main as="main">
        <Title>КОНТАКТЫ</Title>
        <Columns>
          <Column>
            {contacts.map((item) => (
              <Card key={item.city}>
                <CardTitle>{item.city}</CardTitle>
                <Info>
                  <div>
                    <Label>Адрес:</Label>
                    <Value>{item.address}</Value>
                  </div>
                  <div>
                    <Label>Телефон:</Label>
                    <Value>{item.phone}</Value>
                  </div>
                  <div>
                    <Label>Email:</Label>
                    <Value>{item.email}</Value>
                  </div>
                </Info>
              </Card>
            ))}
          </Column>
          <Column>
            <MapCard
              height={345}
              left={231}
              address="проспект Акжол, 66/1"
              floor="3"
              phone="+7–700–790–00–79"
              photos="160"
              payments={
                <>
                  Наличный расчёт • Оплата через банк •<br />
                  Оплата по QR-коду
                </>
              }
            >
              <AstanaMap />
            </MapCard>
            <MapCard
              height={285}
              left={60}
              address="Магистральная улица, 17а"
              floor="2"
              phone="+7–771–538–75–75"
              photos="66"
              payments="Наличный расчёт"
            >
              <AlmatyMap />
            </MapCard>
          </Column>
        </Columns>
      </Main>

      <Footer>
        <FooterRow>
          <FooterCol $width={256}>
            <FooterLogo href="#home" aria-label="PRO REKLAMA.KZ">
              <Logo dim />
            </FooterLogo>
            <About>Рекламно-производственная компания</About>
          </FooterCol>
          <FooterCol $width={195}>
            <FooterTitle>НАВИГАЦИЯ</FooterTitle>
            <FooterList>
              {pages.map((name) => (
                <li key={name}>
                  <a href="#page">{name}</a>
                </li>
              ))}
            </FooterList>
          </FooterCol>
          <FooterCol $width={261}>
            <FooterTitle>УСЛУГИ</FooterTitle>
            <FooterList>
              {services.map((name) => (
                <li key={name}>
                  <a href="#service">{name}</a>
                </li>
              ))}
            </FooterList>
          </FooterCol>
          <FooterCol $width={260}>
            <FooterTitle>КОНТАКТЫ</FooterTitle>
            <Address>г. Астана, проспект Акжол, 66/1 — 3 этаж</Address>
            <Address>г. Алматы, 2-я братская, 48</Address>
          </FooterCol>
          <BackCall>ОБРАТНЫЙ ЗВОНОК</BackCall>
        </FooterRow>
      </Footer>

      <Socials>
        <Social href="#instagram" $bg="linear-gradient(#d60fd8, #e8508c 50%, #ff9f0a 95%)" aria-label="Instagram">
          <svg width="32" height="32" viewBox="0 0 32 32" fill="none" stroke="#fff" strokeWidth="4">
            <rect x="2" y="2" width="28" height="28" rx="6" />
            <circle cx="16" cy="16" r="6" />
            <circle cx="24" cy="8" r="2" fill="#fff" stroke="none" />
          </svg>
        </Social>
        <Social href="#whatsapp" $bg="#2fc62b" aria-label="WhatsApp">
          <svg width="34" height="34" viewBox="0 0 34 34">
            <path d="M4 30l2-8A13.500 13.500 0 1 1 12 28z" fill="none" stroke="#fff" strokeWidth="4" strokeLinejoin="round" />
            <path d="M11 11q2-3 4 0l1 3-1 2q1 3 4 4l2-1 3 2q1 2-2 3-5 1-9-4t-2-9z" fill="#fff" />
          </svg>
        </Social>
      </Socials>
      <Chat aria-label="Чат">
        <svg width="30" height="30" viewBox="0 0 30 30" fill="none" stroke="#fff" strokeWidth="2" strokeLinejoin="round">
          <path d="M8 2h14q6 0 6 6v10q0 6-6 6h-3l-4 4-4-4H8q-6 0-6-6V8q0-6 6-6z" />
          <path d="M9 11h13M9 16h9" />
        </svg>
      </Chat>
    </Page>
  )
}
export default App
